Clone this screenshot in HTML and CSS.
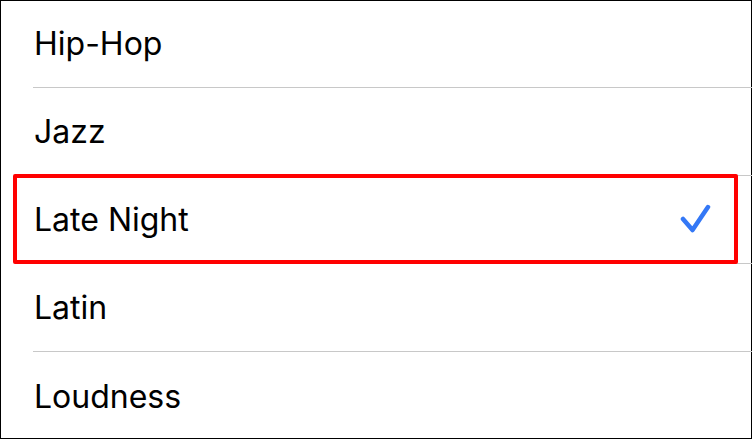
FILE: index.html
```html
<!DOCTYPE html>
<html lang="en">
<head>
  <meta charset="UTF-8">
  <title>Genres</title>
  <link rel="stylesheet" href="styles.css">
</head>
<body>
  <div class="frame">
    <ul class="list">
      <li class="row"><span class="label">Hip-Hop</span></li>
      <li class="row"><span class="label">Jazz</span></li>
      <li class="row selected">
        <span class="label">Late Night</span>
        <svg class="check" width="32" height="32" viewBox="0 0 32 32">
          <path d="M3 15 L12.5 26 L28 3" fill="none" stroke="#3478f6" stroke-width="4.5" stroke-linecap="round" stroke-linejoin="round"/>
        </svg>
        <div class="highlight"></div>
      </li>
      <li class="row"><span class="label">Latin</span></li>
      <li class="row"><span class="label">Loudness</span></li>
    </ul>
  </div>
</body>
</html>
```

FILE: styles.css
```css
* { box-sizing: border-box; }
body {
  margin: 0;
  font-family: 'Inter', 'Liberation Sans', sans-serif;
  background-color: white;
}
.frame {
  width: 752px;
  height: 439px;
  outline: 1px solid #000;
  outline-offset: -1px;
  overflow: hidden;
}
.list {
  list-style: none;
  margin: 0;
  padding: 0;
}
.row {
  position: relative;
  display: flex;
  align-items: center;
  justify-content: space-between;
  height: 88px;
  margin-left: 33px;
  padding-left: 1px;
  padding-right: 40px;
  border-bottom: 1px solid #c8c8c8;
  font-size: 32px;
  color: #000;
}
.row:last-child { border-bottom: none; }
.check {
  display: block;
  margin-top: 1px;
}
.highlight {
  position: absolute;
  top: -2px;
  left: -20px;
  right: 14px;
  height: 90px;
  border: 4px solid #ff0000;
  border-radius: 2px;
}
```
